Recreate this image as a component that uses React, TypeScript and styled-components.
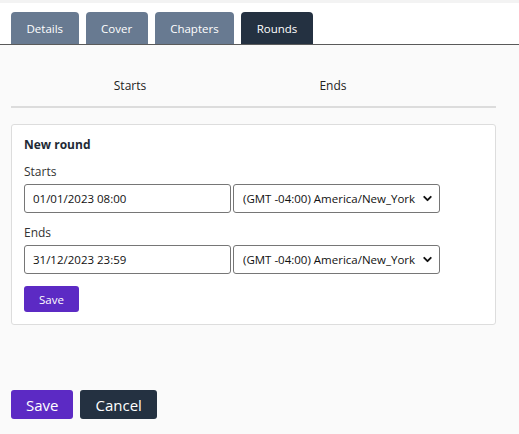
import styled, { createGlobalStyle } from "styled-components";
import { ChevronDown } from "lucide-react";

const GlobalStyle = createGlobalStyle`
  html, body {
    margin: 0;
    padding: 0;
    background: #fafafa;
    font-family: "Open Sans", "Noto Sans", sans-serif;
    color: #222;
  }
  * {
    box-sizing: border-box;
  }
`;

const Page = styled.div`
  width: 519px;
  height: 434px;
  display: flex;
  flex-direction: column;
  background: #fafafa;
`;

const TopStrip = styled.div`
  height: 3px;
  background: #f3f3f3;
`;

const TabBar = styled.div`
  display: flex;
  gap: 7px;
  padding: 9px 0 0 11px;
  background: #ffffff;
  border-bottom: 1px solid #5a5a5a;
`;

const Tab = styled.button<{ $active?: boolean }>`
  height: 32px;
  padding: 0 15.5px;
  border: none;
  border-radius: 4px 4px 0 0;
  background: ${(p) => (p.$active ? "#243141" : "#687a91")};
  color: #ffffff;
  font-family: inherit;
  font-size: 11.5px;
  cursor: pointer;
`;

const Content = styled.div`
  width: 485px;
  margin-left: 11px;
  display: flex;
  flex-direction: column;
`;

const TableHead = styled.div`
  display: grid;
  grid-template-columns: 238px 168px 1fr;
  padding: 33px 0 12px;
  border-bottom: 2px solid #dcdcdc;
  font-size: 12px;
  line-height: 16px;
`;

const HeadCell = styled.div`
  text-align: center;
`;

const Card = styled.div`
  margin-top: 16px;
  padding: 12px;
  background: #ffffff;
  border: 1px solid #dddddd;
  border-radius: 3px;
  display: flex;
  flex-direction: column;
  align-items: flex-start;
`;

const CardTitle = styled.div`
  font-size: 12px;
  font-weight: 700;
  line-height: 16px;
  color: #222a35;
  margin-bottom: 11px;
`;

const Label = styled.div`
  font-size: 12px;
  line-height: 16px;
  color: #333;
  margin-bottom: 4px;
`;

const FieldRow = styled.div`
  display: flex;
  gap: 2px;
  margin-bottom: 12px;
`;

const TextInput = styled.input`
  width: 207px;
  height: 29px;
  padding: 0 8px;
  border: 1px solid #767676;
  border-radius: 3px;
  font-family: inherit;
  font-size: 11.5px;
  color: #111;
  background: #fff;
  outline: none;
`;

const SelectWrap = styled.div`
  position: relative;
  width: 207px;
  height: 29px;
`;

const Select = styled.select`
  width: 100%;
  height: 100%;
  padding: 0 20px 0 9px;
  border: 1px solid #767676;
  border-radius: 3px;
  appearance: none;
  font-family: inherit;
  font-size: 11.5px;
  color: #111;
  background: #fff;
  outline: none;
`;

const Chevron = styled(ChevronDown)`
  position: absolute;
  right: 6px;
  top: 8px;
  pointer-events: none;
`;

const Button = styled.button<{ $variant?: "primary" | "dark"; $size?: "sm" | "md" }>`
  height: ${(p) => (p.$size === "sm" ? "26px" : "29px")};
  padding: 0 15px;
  border: none;
  border-radius: 3px;
  background: ${(p) => (p.$variant === "dark" ? "#243141" : "#5c2ac4")};
  color: #ffffff;
  font-family: inherit;
  font-size: ${(p) => (p.$size === "sm" ? "11.5px" : "15px")};
  cursor: pointer;
`;

const Actions = styled.div`
  display: flex;
  gap: 7px;
  margin-top: 65px;
`;

const timezone = "(GMT -04:00) America/New_York";

function App() {
  return (
    <>
      <GlobalStyle />
      <Page>
        <TopStrip />
        <TabBar>
          <Tab>Details</Tab>
          <Tab>Cover</Tab>
          <Tab>Chapters</Tab>
          <Tab $active>Rounds</Tab>
        </TabBar>
        <Content>
          <TableHead>
            <HeadCell>Starts</HeadCell>
            <HeadCell>Ends</HeadCell>
            <HeadCell />
          </TableHead>
          <Card>
            <CardTitle>New round</CardTitle>
            <Label>Starts</Label>
            <FieldRow>
              <TextInput defaultValue="01/01/2023 08:00" />
              <SelectWrap>
                <Select defaultValue={timezone}>
                  <option>{timezone}</option>
                </Select>
                <Chevron size={13} strokeWidth={3.5} color="#111" />
              </SelectWrap>
            </FieldRow>
            <Label>Ends</Label>
            <FieldRow>
              <TextInput defaultValue="31/12/2023 23:59" />
              <SelectWrap>
                <Select defaultValue={timezone}>
                  <option>{timezone}</option>
                </Select>
                <Chevron size={13} strokeWidth={3.5} color="#111" />
              </SelectWrap>
            </FieldRow>
            <Button $size="sm">Save</Button>
          </Card>
          <Actions>
            <Button>Save</Button>
            <Button $variant="dark">Cancel</Button>
          </Actions>
        </Content>
      </Page>
    </>
  );
}

export default App;
